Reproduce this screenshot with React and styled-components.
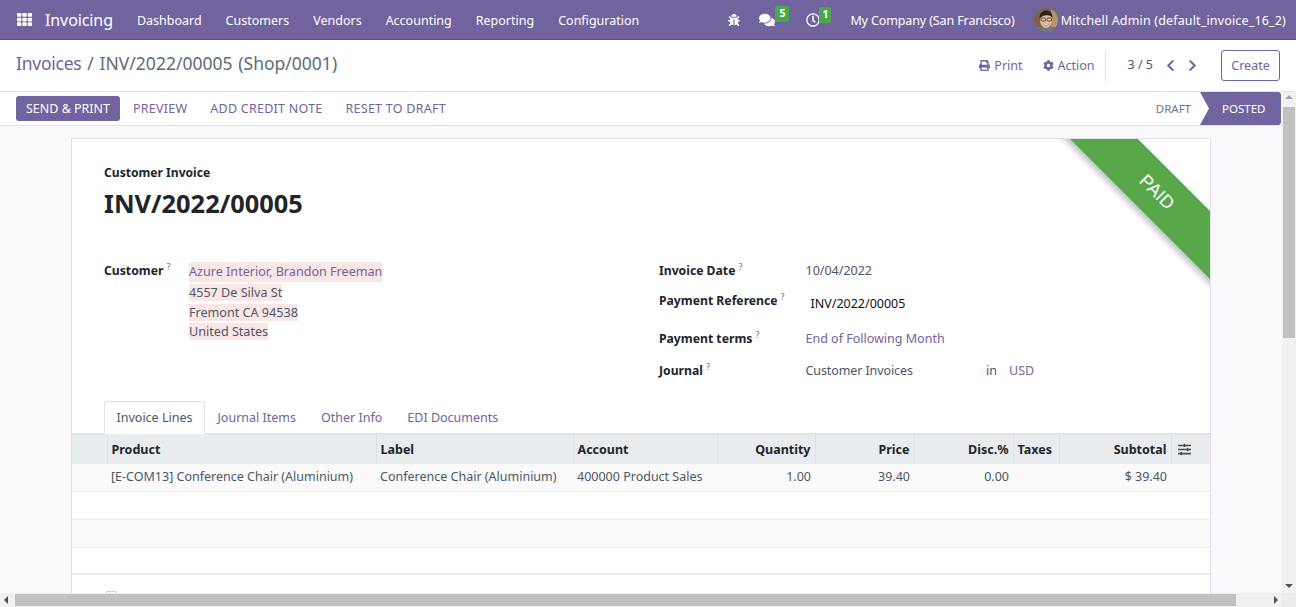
import styled, { createGlobalStyle } from 'styled-components';
import {
  FaBug,
  FaCog,
  FaChevronLeft,
  FaChevronRight,
  FaComments,
  FaPrint,
  FaRegClock,
  FaSlidersH,
  FaTh,
} from 'react-icons/fa';

const purple = '#71639e';
const body = '#4c5866';

const GlobalStyle = createGlobalStyle`
  html, body {
    margin: 0;
    padding: 0;
    overflow: hidden;
  }
  body {
    font-family: "Noto Sans", "Open Sans", sans-serif;
    font-size: 13px;
    color: ${body};
  }
`;

const Page = styled.div`
  width: 1296px;
  height: 607px;
  display: flex;
  flex-direction: column;
  overflow: hidden;
  background: #f9f9fb;
`;

const Nav = styled.header`
  height: 40px;
  flex: none;
  box-sizing: border-box;
  display: flex;
  align-items: center;
  padding: 0 10px 0 17px;
  background: ${purple};
  border-bottom: 1px solid #5f5386;
  color: #fff;
`;

const AppName = styled.span`
  font-size: 16px;
  margin-left: 13px;
  margin-right: 24px;
  letter-spacing: -0.1px;
`;

const MenuItem = styled.span`
  margin-right: 24px;
  padding-top: 1px;
  font-size: 12.5px;
  white-space: nowrap;
`;

const NavRight = styled.div`
  margin-left: auto;
  padding-top: 1px;
  display: flex;
  align-items: center;
  font-size: 12.5px;
  white-space: nowrap;
`;

const NavIcon = styled.span`
  position: relative;
  display: flex;
  margin-left: ${({ $gap }) => $gap}px;
  font-size: ${({ $size }) => $size || 14}px;
`;

const Badge = styled.span`
  position: absolute;
  top: -6px;
  left: ${({ $left }) => $left}px;
  width: ${({ $width }) => $width}px;
  height: 16px;
  border-radius: 2px;
  background: #4ba84a;
  color: #fff;
  font-size: 10.5px;
  font-weight: 700;
  line-height: 14px;
  text-align: center;
`;

const Company = styled.span`
  margin-left: 30px;
  letter-spacing: -0.12px;
`;

const UserName = styled.span`
  letter-spacing: 0.16px;
`;

const Avatar = styled.svg`
  width: 24px;
  height: 24px;
  margin-left: 19px;
  margin-right: 3px;
  border-radius: 50%;
`;

const TitleBar = styled.div`
  height: 52px;
  flex: none;
  box-sizing: border-box;
  display: flex;
  align-items: center;
  padding: 0 16px 0 16px;
  background: #fff;
  border-bottom: 1px solid #dee2e6;
`;

const Crumbs = styled.div`
  font-size: 17.5px;
  word-spacing: 1.3px;
  color: #5f6b78;
  white-space: nowrap;
  padding-bottom: 5px;
`;

const CrumbLink = styled.span`
  color: ${purple};
  letter-spacing: -0.25px;
`;

const TitleActions = styled.div`
  margin-left: auto;
  display: flex;
  align-items: center;
`;

const ActionLink = styled.span`
  display: flex;
  align-items: center;
  gap: 4px;
  color: ${purple};
  margin-left: 20px;
  font-size: 12.5px;
  svg {
    font-size: 11px;
  }
`;

const Separator = styled.div`
  width: 1px;
  height: 30px;
  background: #dee2e6;
  margin: 0 22px 0 10px;
`;

const Pager = styled.span`
  font-size: 12.5px;
  color: ${body};
  padding-bottom: 2px;
  margin-right: 5px;
`;

const PagerArrow = styled.span`
  display: flex;
  color: ${purple};
  font-size: 13px;
  margin-left: ${({ $gap }) => $gap}px;
`;

const CreateButton = styled.button`
  width: 59px;
  height: 31px;
  margin-left: 22px;
  padding: 0;
  background: #fff;
  border: 1px solid ${purple};
  border-radius: 3px;
  color: ${purple};
  font: inherit;
  font-size: 12.5px;
`;

const Middle = styled.div`
  flex: 1;
  min-height: 0;
  display: flex;
`;

const Main = styled.main`
  flex: 1;
  min-width: 0;
  display: flex;
  flex-direction: column;
  overflow: hidden;
`;

const StatusRow = styled.div`
  height: 34px;
  flex: none;
  box-sizing: border-box;
  display: flex;
  align-items: center;
  padding: 0 1px 0 16px;
  background: #fff;
  border-bottom: 1px solid #dee2e6;
`;

const PrimaryButton = styled.button`
  height: 25px;
  width: 104px;
  padding: 0;
  margin-right: 13px;
  background: ${purple};
  border: 0;
  border-radius: 3px;
  color: #fff;
  font: inherit;
  font-size: 12.5px;
`;

const TextButton = styled.span`
  color: ${purple};
  margin-right: 23px;
  font-size: 12.5px;
  letter-spacing: 0.25px;
  white-space: nowrap;
`;

const StatusSteps = styled.div`
  margin-left: auto;
  display: flex;
  align-items: center;
  height: 33px;
  font-size: 11.5px;
`;

const DraftStep = styled.span`
  color: #6c7682;
  margin-right: 9px;
`;

const PostedStep = styled.span`
  width: 81px;
  height: 33px;
  box-sizing: border-box;
  padding-left: 22px;
  display: flex;
  align-items: center;
  background: ${purple};
  color: #fff;
  clip-path: polygon(0 0, calc(100% - 2px) 0, 100% 2px, 100% calc(100% - 2px), calc(100% - 2px) 100%, 0 100%, 9px 50%);
`;

const Content = styled.div`
  flex: 1;
  min-height: 0;
  overflow: hidden;
  padding: 12px 71px 0;
`;

const Sheet = styled.section`
  position: relative;
  height: 600px;
  background: #fff;
  border: 1px solid #dee2e6;
  border-bottom: 0;
`;

const Ribbon = styled.div`
  position: absolute;
  top: 0;
  right: 0;
  width: 180px;
  height: 180px;
  overflow: hidden;
`;

const RibbonBand = styled.div`
  position: absolute;
  left: -23px;
  top: 29px;
  width: 300px;
  height: 48px;
  line-height: 48px;
  text-align: center;
  transform: rotate(45deg);
  background: #58a84b;
  color: #fff;
  font-family: "Liberation Sans", sans-serif;
  font-size: 18px;
  box-shadow: 0 4px 6px rgba(0, 0, 0, 0.25);
`;

const SheetHead = styled.div`
  padding: 25px 32px 0;
`;

const SubTitle = styled.div`
  font-weight: 700;
  font-size: 12.1px;
  line-height: 17px;
  color: #212529;
`;

const BigTitle = styled.h1`
  margin: 5px 0 0;
  font-size: 25.4px;
  line-height: 35px;
  font-weight: 700;
  color: #212529;
`;

const FormGrid = styled.div`
  display: grid;
  grid-template-columns: 555px 1fr;
  padding: 0 32px;
  margin-top: 40px;
  height: 137px;
`;

const FormRow = styled.div`
  display: flex;
  align-items: flex-start;
  min-height: ${({ $height }) => $height}px;
`;

const Label = styled.div`
  flex: none;
  width: ${({ $width }) => $width}px;
  font-weight: 700;
  font-size: 12.2px;
  line-height: 20px;
  color: #212529;
  white-space: nowrap;
`;

const Help = styled.sup`
  color: ${purple};
  font-weight: 400;
  font-size: 9px;
  margin-left: 3px;
  line-height: 0;
`;

const Address = styled.div`
  display: flex;
  flex-direction: column;
  align-items: flex-start;
  padding-top: 1px;
  font-size: 12.6px;
`;

const AddressLine = styled.span`
  background: #fbe6e6;
  color: ${({ $link }) => ($link ? purple : body)};
  line-height: ${({ $height }) => $height}px;
  margin-bottom: ${({ $gap }) => $gap}px;
`;

const Value = styled.div`
  line-height: 20px;
  font-size: 12.5px;
  color: ${({ $link }) => ($link ? purple : body)};
  white-space: nowrap;
`;

const Reference = styled(Value)`
  color: #111;
  padding: 3px 0 0 5px;
`;

const Journal = styled(Value)`
  width: 180.5px;
  letter-spacing: -0.1px;
`;

const InText = styled(Value)`
  width: 23px;
`;

const Tabs = styled.nav`
  display: flex;
  align-items: flex-end;
  height: 32px;
  padding-left: 32px;
  margin-top: 3px;
`;

const Tab = styled.span`
  box-sizing: border-box;
  height: ${({ $active }) => ($active ? '33px' : '32px')};
  margin-bottom: ${({ $active }) => ($active ? '-1px' : '0')};
  padding: 0 11.5px;
  line-height: 31px;
  font-size: 12.5px;
  color: ${({ $active }) => ($active ? body : purple)};
  background: ${({ $active }) => ($active ? '#fff' : 'transparent')};
  border: 1px solid ${({ $active }) => ($active ? '#dee2e6' : 'transparent')};
  border-bottom-color: ${({ $active }) => ($active ? '#fff' : 'transparent')};
  border-radius: 3px 3px 0 0;
  position: relative;
  white-space: nowrap;
`;

const Table = styled.table`
  width: 100%;
  table-layout: fixed;
  border-collapse: collapse;
  border-top: 1px solid #dee2e6;
  font-size: 12.5px;
`;

const Th = styled.th`
  height: 30px;
  padding: 0 4px;
  background: #e9ecef;
  color: #212529;
  font-size: 12.5px;
  font-weight: 700;
  text-align: ${({ $right }) => ($right ? 'right' : 'left')};
  border-left: 1px solid #dee2e6;
  white-space: nowrap;
  &:first-child {
    border-left: 0;
  }
`;

const SliderIcon = styled(FaSlidersH)`
  display: block;
  margin-left: 2px;
  font-size: 13px;
  color: #4c4c4c;
`;

const Tr = styled.tr`
  height: ${({ $height }) => $height || 28}px;
  background: ${({ $striped }) => ($striped ? '#fafafa' : '#fff')};
  border-bottom: ${({ $last }) => ($last ? '2px solid #e9ecef' : '1px solid #e9ecef')};
`;

const Td = styled.td`
  padding: 0 4px 2px;
  color: ${body};
  text-align: ${({ $right }) => ($right ? 'right' : 'left')};
  white-space: nowrap;
  overflow: hidden;
`;

const CheckHint = styled.div`
  width: 9px;
  height: 9px;
  margin: 16px 0 0 34px;
  border: 1px solid #ced4da;
  border-radius: 1px;
`;

const VerticalBar = styled.div`
  width: 14px;
  flex: none;
  position: relative;
  background: #f1f1f1;
  border-bottom: 0;
`;

const VerticalThumb = styled.div`
  position: absolute;
  top: 15px;
  left: 1px;
  width: 12px;
  height: 231px;
  background: #c1c1c1;
`;

const Arrow = styled.span`
  position: absolute;
  width: 0;
  height: 0;
  border: 4px solid transparent;
  ${({ $dir }) => $dir === 'up' && 'top: 3px; left: 3px; border-top: 0; border-bottom-color: #a3a3a3;'}
  ${({ $dir }) => $dir === 'down' && 'bottom: 5px; left: 3px; border-bottom: 0; border-top-color: #505050;'}
  ${({ $dir }) => $dir === 'left' && 'left: 4px; top: 3px; border-left: 0; border-right-color: #505050;'}
  ${({ $dir }) => $dir === 'right' && 'right: 18px; top: 3px; border-right: 0; border-left-color: #505050;'}
`;

const HorizontalBar = styled.div`
  height: 14px;
  flex: none;
  position: relative;
  background: #f1f1f1;
`;

const HorizontalThumb = styled.div`
  position: absolute;
  left: 15px;
  top: 1px;
  width: 1221px;
  height: 12px;
  background: #c1c1c1;
`;

const Corner = styled.div`
  position: absolute;
  right: 0;
  top: 0;
  width: 14px;
  height: 14px;
  background: #ececec;
`;

const columns = [35, 269, 197, 144, 98, 99, 99, 46, 112, 39];

const heads = [
  { key: 'handle' },
  { key: 'Product' },
  { key: 'Label' },
  { key: 'Account' },
  { key: 'Quantity', right: true },
  { key: 'Price', right: true },
  { key: 'Disc.%', right: true },
  { key: 'Taxes' },
  { key: 'Subtotal', right: true },
];

const line = [
  '',
  '[E-COM13] Conference Chair (Aluminium)',
  'Conference Chair (Aluminium)',
  '400000 Product Sales',
  '1.00',
  '39.40',
  '0.00',
  '',
  '$ 39.40',
  '',
];

const menu = ['Dashboard', 'Customers', 'Vendors', 'Accounting', 'Reporting', 'Configuration'];

const UserPhoto = () => (
  <Avatar viewBox="0 0 24 24">
    <rect width="24" height="24" fill="#7d6248" />
    <rect x="17" y="1" width="7" height="19" fill="#b79568" />
    <rect x="0" y="19" width="24" height="5" fill="#6a7a82" />
    <ellipse cx="12" cy="12.5" rx="6" ry="7.5" fill="#e2b79a" />
    <path d="M5.500 11C5 5 9 2.500 12.500 2.500S19 6 18.500 10C17 7.500 14 7 11 7.500S7 9 5.500 11Z" fill="#2e221c" />
    <rect x="7" y="10" width="4.500" height="3" rx="1" fill="none" stroke="#2b2b2b" strokeWidth="0.700" />
    <rect x="13" y="10" width="4.500" height="3" rx="1" fill="none" stroke="#2b2b2b" strokeWidth="0.700" />
    <path d="M9 16c2 1.500 4.500 1.500 6 0" fill="#fff" stroke="#8c5a48" strokeWidth="0.500" />
  </Avatar>
);

const App = () => (
  <Page>
    <GlobalStyle />
    <Nav>
      <FaTh size={15} />
      <AppName>Invoicing</AppName>
      {menu.map((item) => (
        <MenuItem key={item}>{item}</MenuItem>
      ))}
      <NavRight>
        <NavIcon $size={12}>
          <FaBug />
        </NavIcon>
        <NavIcon $gap={19} $size={16}>
          <FaComments />
          <Badge $left={16} $width={14}>
            5
          </Badge>
        </NavIcon>
        <NavIcon $gap={31} $size={14}>
          <FaRegClock />
          <Badge $left={13} $width={12}>
            1
          </Badge>
        </NavIcon>
        <Company>My Company (San Francisco)</Company>
        <UserPhoto />
        <UserName>Mitchell Admin (default_invoice_16_2)</UserName>
      </NavRight>
    </Nav>

    <TitleBar>
      <Crumbs>
        <CrumbLink>Invoices</CrumbLink> / INV/2022/00005 (Shop/0001)
      </Crumbs>
      <TitleActions>
        <ActionLink>
          <FaPrint />
          Print
        </ActionLink>
        <ActionLink>
          <FaCog />
          Action
        </ActionLink>
        <Separator />
        <Pager>3 / 5</Pager>
        <PagerArrow $gap={6}>
          <FaChevronLeft />
        </PagerArrow>
        <PagerArrow $gap={9}>
          <FaChevronRight />
        </PagerArrow>
        <CreateButton>Create</CreateButton>
      </TitleActions>
    </TitleBar>

    <Middle>
      <Main>
        <StatusRow>
          <PrimaryButton>SEND &amp; PRINT</PrimaryButton>
          <TextButton>PREVIEW</TextButton>
          <TextButton>ADD CREDIT NOTE</TextButton>
          <TextButton>RESET TO DRAFT</TextButton>
          <StatusSteps>
            <DraftStep>DRAFT</DraftStep>
            <PostedStep>POSTED</PostedStep>
          </StatusSteps>
        </StatusRow>

        <Content>
          <Sheet>
            <Ribbon>
              <RibbonBand>PAID</RibbonBand>
            </Ribbon>
            <SheetHead>
              <SubTitle>Customer Invoice</SubTitle>
              <BigTitle>INV/2022/00005</BigTitle>
            </SheetHead>

            <FormGrid>
              <FormRow>
                <Label $width={85}>
                  Customer<Help>?</Help>
                </Label>
                <Address>
                  <AddressLine $link $height={20} $gap={2}>
                    Azure Interior, Brandon Freeman
                  </AddressLine>
                  <AddressLine $height={17} $gap={3}>
                    4557 De Silva St
                  </AddressLine>
                  <AddressLine $height={17} $gap={2}>
                    Fremont CA 94538
                  </AddressLine>
                  <AddressLine $height={17} $gap={0}>
                    United States
                  </AddressLine>
                </Address>
              </FormRow>
              <div>
                <FormRow $height={30}>
                  <Label $width={146.5}>
                    Invoice Date<Help>?</Help>
                  </Label>
                  <Value>10/04/2022</Value>
                </FormRow>
                <FormRow $height={38}>
                  <Label $width={146.5}>
                    Payment Reference<Help>?</Help>
                  </Label>
                  <Reference>INV/2022/00005</Reference>
                </FormRow>
                <FormRow $height={32}>
                  <Label $width={146.5}>
                    Payment terms<Help>?</Help>
                  </Label>
                  <Value $link>End of Following Month</Value>
                </FormRow>
                <FormRow>
                  <Label $width={146.5}>
                    Journal<Help>?</Help>
                  </Label>
                  <Journal>Customer Invoices</Journal>
                  <InText>in</InText>
                  <Value $link>USD</Value>
                </FormRow>
              </div>
            </FormGrid>

            <Tabs>
              <Tab $active>Invoice Lines</Tab>
              <Tab>Journal Items</Tab>
              <Tab>Other Info</Tab>
              <Tab>EDI Documents</Tab>
            </Tabs>

            <Table>
              <colgroup>
                {columns.map((width, index) => (
                  <col key={index} width={width} />
                ))}
              </colgroup>
              <thead>
                <tr>
                  {heads.map((head) => (
                    <Th key={head.key} $right={head.right}>
                      {head.key === 'handle' ? '' : head.key}
                    </Th>
                  ))}
                  <Th>
                    <SliderIcon />
                  </Th>
                </tr>
              </thead>
              <tbody>
                <Tr $striped $height={27}>
                  {line.map((cell, index) => (
                    <Td key={index} $right={index >= 4 && index <= 8}>
                      {cell}
                    </Td>
                  ))}
                </Tr>
                <Tr>
                  <Td colSpan={10} />
                </Tr>
                <Tr $striped>
                  <Td colSpan={10} />
                </Tr>
                <Tr $last $height={27}>
                  <Td colSpan={10} />
                </Tr>
              </tbody>
            </Table>
            <CheckHint />
          </Sheet>
        </Content>
      </Main>

      <VerticalBar>
        <Arrow $dir="up" />
        <VerticalThumb />
        <Arrow $dir="down" />
      </VerticalBar>
    </Middle>

    <HorizontalBar>
      <Arrow $dir="left" />
      <HorizontalThumb />
      <Arrow $dir="right" />
      <Corner />
    </HorizontalBar>
  </Page>
);

export default App;
